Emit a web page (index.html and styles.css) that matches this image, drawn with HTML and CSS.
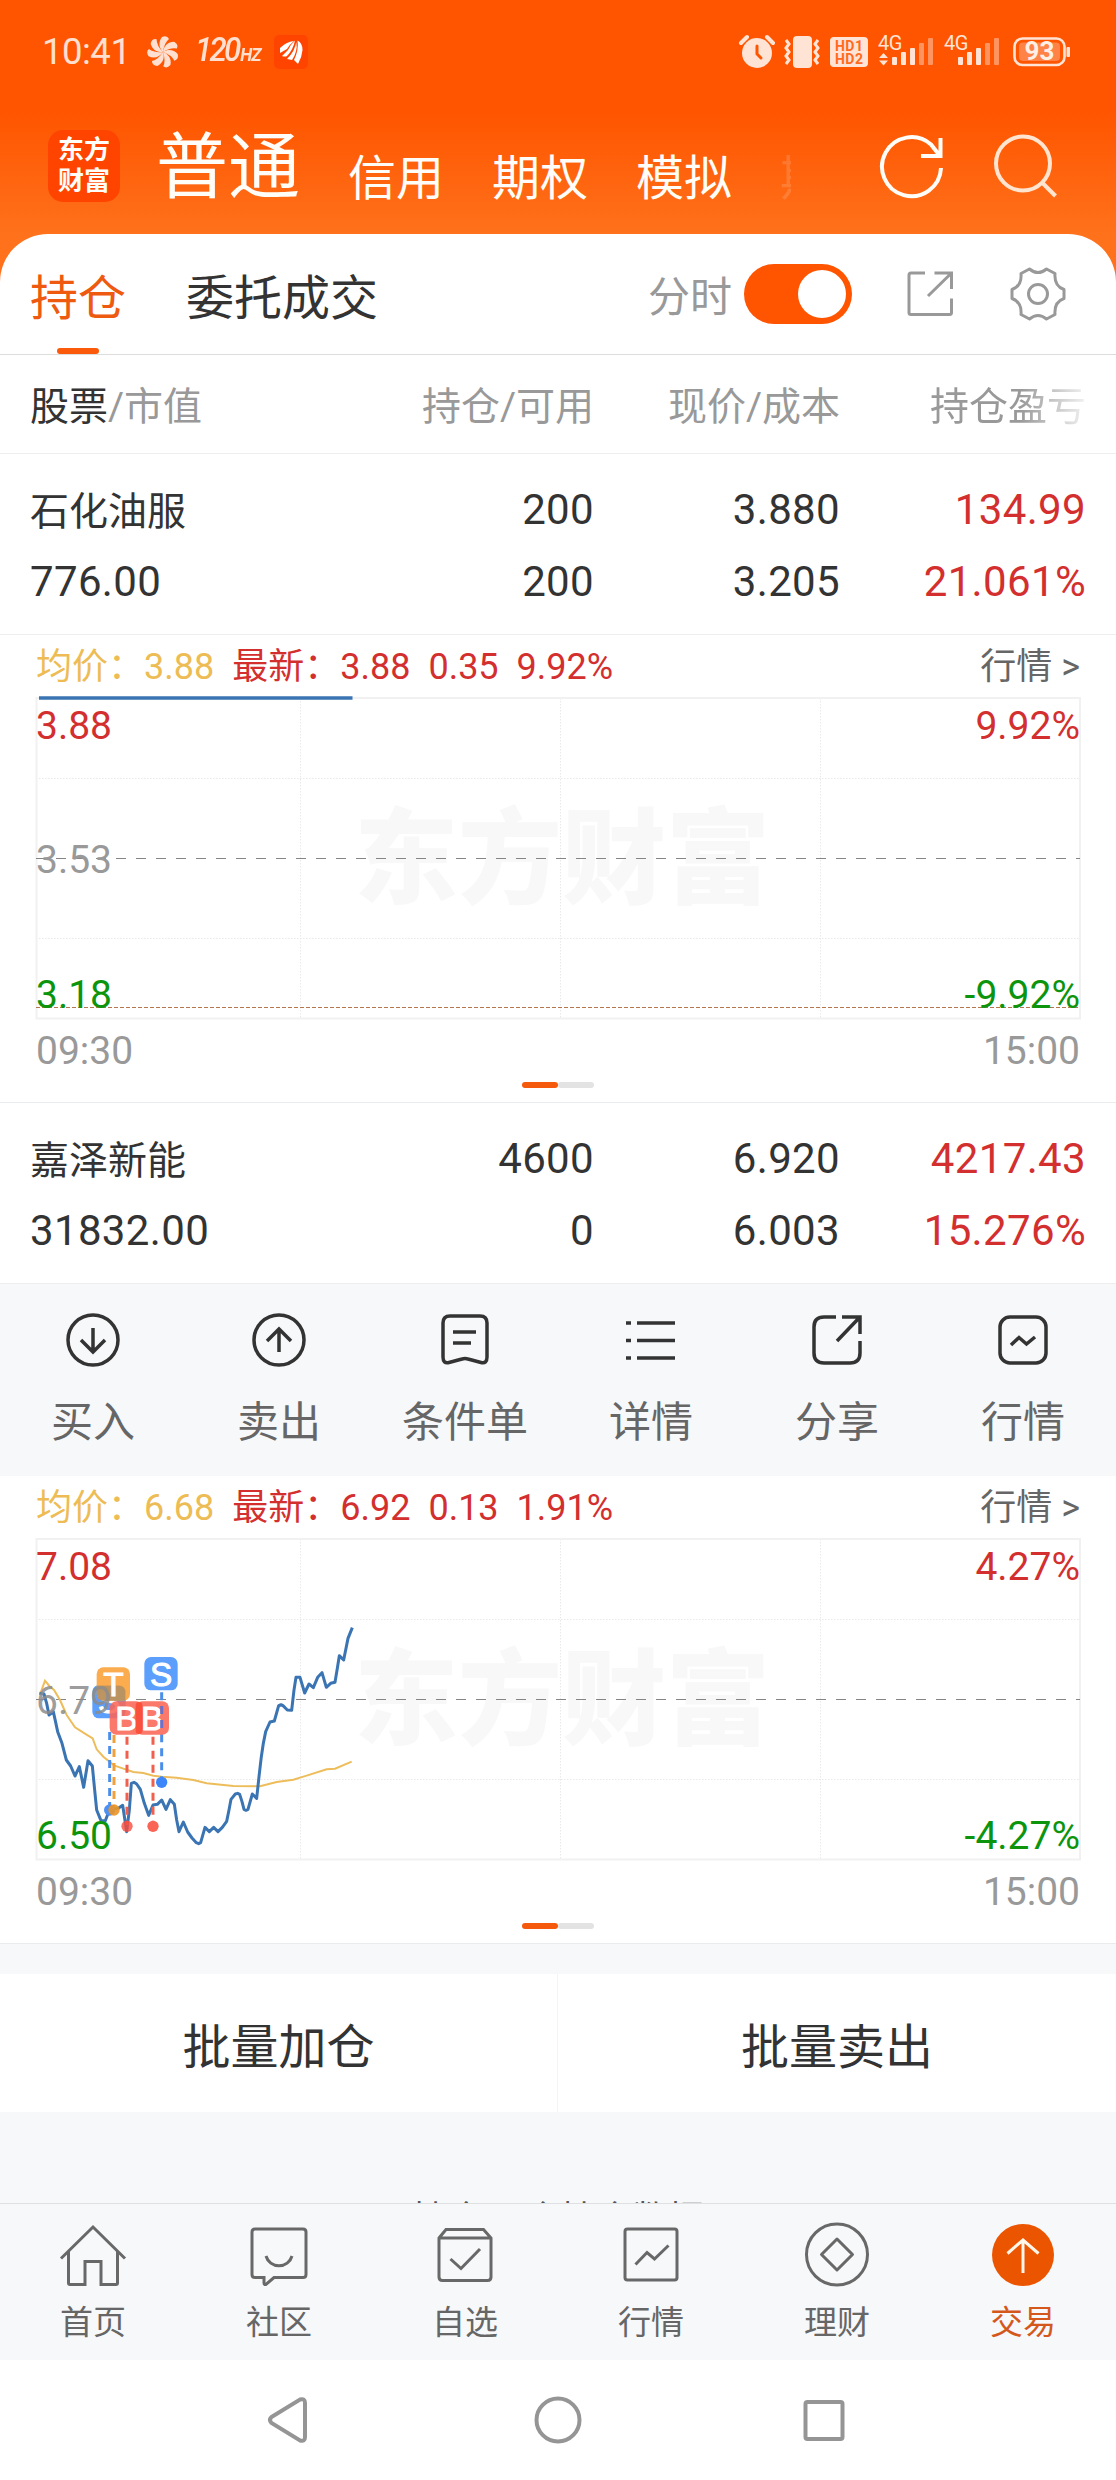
FILE: index.html
```html
<!DOCTYPE html>
<html lang="zh-CN">
<head>
<meta charset="utf-8">
<title>持仓</title>
<link rel="stylesheet" href="styles.css">
</head>
<body>
<header class="top">
  <div class="status">
    <span class="clock">10:41</span>
    <svg class="fan" width="32" height="32" viewBox="-16 -16 32 32">
      <g fill="#ffe0d0"><path id="blade" d="M0 0C-4-4-5-10-1-15Q4-17 6-13Q1-9 0 0Z"/><use href="#blade" transform="rotate(51.4)"/><use href="#blade" transform="rotate(102.8)"/><use href="#blade" transform="rotate(154.3)"/><use href="#blade" transform="rotate(205.7)"/><use href="#blade" transform="rotate(257.1)"/><use href="#blade" transform="rotate(308.6)"/></g>
    </svg>
    <span class="hz">120<small>HZ</small></span>
    <svg class="mini" width="34" height="34" viewBox="0 0 34 34"><rect width="34" height="34" rx="5" fill="#ff4400"/><g fill="#fff"><path d="M6 13Q12 7 20 6Q15 10 13 14L6 18Z"/><path d="M21 5.500Q16 10 14 15L8 21Q11 22 13 21Q19 15 21 5.500Z"/><path d="M23.500 5.500Q28.500 8 28.500 15Q28 22 24 29L20 25Q25 15 23.500 5.500Z"/><path d="M22.300 7Q21 16 13 24L18 25Q24 16 22.300 7Z"/></g></svg>
    <svg class="sys" width="334" height="36" viewBox="738 34 334 36">
      <g fill="#ffe4d6">
        <circle cx="757" cy="53" r="15"/>
        <path d="M741 43l6-6M773 43l-6-6" stroke="#ffe4d6" stroke-width="4" stroke-linecap="round"/>
        <path d="M757 46v8l4 4" stroke="#ff5500" stroke-width="3" fill="none" stroke-linecap="round"/>
        <rect x="793" y="36" width="19" height="32" rx="4"/>
        <path d="M786 40l3 4-3 4 3 4-3 4 3 4-3 4M818 40l-3 4 3 4-3 4 3 4-3 4 3 4" stroke="#ffe4d6" stroke-width="3" fill="none"/>
        <rect x="830" y="37" width="38" height="30" rx="4"/>
        <rect x="892" y="57" width="5" height="8" rx="1"/><rect x="901" y="52" width="5" height="13" rx="1"/><rect x="910" y="48" width="5" height="17" rx="1"/>
        <rect x="958" y="57" width="5" height="8" rx="1"/><rect x="967" y="52" width="5" height="13" rx="1"/><rect x="976" y="48" width="5" height="17" rx="1"/>
        <path d="M879 58l4.500-5 4.500 5zM879 60.500l4.500 5 4.500-5z"/>
        <rect x="1066.500" y="47" width="3.500" height="10" rx="1"/>
      </g>
      <g fill="#ff9460"><rect x="919" y="43" width="5" height="22" rx="1"/><rect x="928" y="38" width="5" height="27" rx="1"/><rect x="985" y="43" width="5" height="22" rx="1"/><rect x="994" y="38" width="5" height="27" rx="1"/></g>
      <rect x="1014.500" y="38.500" width="50" height="26.500" rx="8" fill="none" stroke="#ffe4d6" stroke-width="2.600"/>
      <rect x="1019" y="42.500" width="41" height="18.500" rx="4" fill="#ff8246"/>
      <g class="sys-text">
        <text x="835" y="50.500" class="hd" textLength="28">HD1</text><text x="835" y="64" class="hd" textLength="28">HD2</text>
        <text x="878" y="50" class="net">4G</text><text x="944" y="50" class="net">4G</text>
        <text x="1039.500" y="60" class="pct" text-anchor="middle">93</text>
      </g>
    </svg>
  </div>
  <nav class="accounts">
    <div class="logo"><span>东方</span><span>财富</span></div>
    <div class="account-tabs"><span class="big">普通</span><span class="small">信用</span><span class="small">期权</span><span class="small">模拟</span><span class="small cut">期</span></div>
    <svg class="head-icons" width="180" height="68" viewBox="879 133 180 68" fill="none" stroke-width="4">
      <path d="M941 168A29.500 29.500 0 1 1 931 144.500L940 156M921 156h19.500v-18" stroke="#fffdf8"/>
      <circle cx="1023" cy="163.500" r="27" stroke="#ffe4d0"/><path d="M1042 182.500l13.500 13.500" stroke="#ffe4d0"/>
    </svg>
  </nav>
</header>

<main class="sheet">
  <div class="tabs">
    <span class="tab active">持仓</span>
    <span class="tab">委托成交</span>
    <span class="toggle-label">分时</span>
    <span class="toggle"><i></i></span>
    <svg class="tab-tools" width="160" height="56" viewBox="906 266 160 56" fill="none" stroke="#999" stroke-width="3">
      <path d="M925 273H911Q909 273 909 275V312.500Q909 314.500 911 314.500H949.500Q951.500 314.500 951.500 312.500V298.500M934.500 273H951.500V289M951 273.500L928 296"/>
      <g transform="translate(1038 294)" stroke-linejoin="round"><path d="M-8.500-25Q0-18 8.500-25L17-20.500Q16-8 26-4.500V4.500Q16 8 17 20.500L8.500 25Q0 18-8.500 25L-17 20.500Q-16 8-26 4.500V-4.500Q-16-8-17-20.500Z"/><circle r="9.500"/></g>
    </svg>
  </div>

  <div class="grid head">
    <span><b>股票</b>/市值</span><span>持仓/可用</span><span>现价/成本</span><span class="fade">持仓盈亏</span>
  </div>

  <div class="grid holding">
    <span class="name">石化油服</span><span>200</span><span>3.880</span><span class="up">134.99</span>
    <span>776.00</span><span>200</span><span>3.205</span><span class="up">21.061%</span>
  </div>

  <section class="chart">
    <div class="quote"><span class="avg">均价：3.88</span><span class="up">最新：3.88</span><span class="up">0.35</span><span class="up">9.92%</span><a>行情 &gt;</a></div>
    <svg class="plot" width="1116" height="321" viewBox="0 698 1116 321">
      <text class="mark" x="562" y="896" text-anchor="middle">东方财富</text>
      <path class="dots" d="M36 778.500H1080M36 938.500H1080M300.500 698V1018M560.500 698V1018M820.500 698V1018"/>
      <rect class="frame" x="36.500" y="698" width="1043.500" height="320.500"/>
      <path class="mid" d="M36 858.500H1080"/>
      <path class="limit" d="M36 1007.500H1080"/>
      <path d="M39 698H352.500" stroke="#3a74b3" stroke-width="3.500"/>
      <g class="axis"><text class="r" x="36" y="739">3.88</text><text class="n" x="36" y="873">3.53</text><text class="g" x="36" y="1008">3.18</text>
      <text class="r" x="1080" y="739" text-anchor="end">9.92%</text><text class="g" x="1080" y="1008" text-anchor="end">-9.92%</text></g>
    </svg>
    <div class="times"><span>09:30</span><span>15:00</span></div>
    <div class="pager"><i class="on"></i><i></i></div>
  </section>

  <div class="grid holding">
    <span class="name">嘉泽新能</span><span>4600</span><span>6.920</span><span class="up">4217.43</span>
    <span>31832.00</span><span>0</span><span>6.003</span><span class="up">15.276%</span>
  </div>

  <div class="actions">
    <div><svg viewBox="-27 -27 54 54"><circle r="25"/><path d="M0-12V12M-12 0L0 12 12 0"/></svg><span>买入</span></div>
    <div><svg viewBox="-27 -27 54 54"><circle r="25"/><path d="M0 12V-11M-12 1L0-11 12 1"/></svg><span>卖出</span></div>
    <div><svg viewBox="-27 -27 54 54"><path d="M-22 17V-17Q-22-24-15-24H15Q22-24 22-17V17Q22 24 16 22.500L3 19Q0 18-3 19L-16 22.500Q-22 24-22 17ZM-12-8H11M-12 3H6"/></svg><span>条件单</span></div>
    <div><svg viewBox="-27 -27 54 54"><path d="M-14-17H24M-14 .500H24M-14 18H24M-25-17h5M-25 .500h5M-25 18h5"/></svg><span>详情</span></div>
    <div><svg viewBox="-27 -27 54 54"><path d="M-1-23H-13Q-23-23-23-13V13Q-23 23-13 23H13Q23 23 23 13V1M5-23H23V-6M22-22L0 1"/></svg><span>分享</span></div>
    <div><svg viewBox="-27 -27 54 54"><rect x="-23" y="-23" width="46" height="46" rx="10"/><path d="M-12 5L-4-2.500 3.500 4 12-3"/></svg><span>行情</span></div>
  </div>

  <section class="chart">
    <div class="quote"><span class="avg">均价：6.68</span><span class="up">最新：6.92</span><span class="up">0.13</span><span class="up">1.91%</span><a>行情 &gt;</a></div>
    <svg class="plot" width="1116" height="321" viewBox="0 1539 1116 321">
      <text class="mark" x="562" y="1737" text-anchor="middle">东方财富</text>
      <path class="dots" d="M36 1619.500H1080M36 1779.500H1080M300.500 1539V1859M560.500 1539V1859M820.500 1539V1859"/>
      <rect class="frame" x="36.500" y="1539" width="1043.500" height="320.500"/>
      <path class="mid" d="M36 1699.500H1080"/>
      <g transform="translate(0 1530) scale(.333333)" fill="none">
        <polyline stroke="#edbd5c" stroke-width="6" points="122,488 135,452 148,468 162,480 180,510 200,555 225,592 250,608 278,625 290,658 310,680 342,706 370,716 400,726 430,729 460,737 485,740 530,743 580,750 620,760 700,768 780,769 830,756 880,749 920,737 980,718 1005,716 1055,695"/>
        <polyline stroke="#3a74b3" stroke-width="9" stroke-linejoin="round" points="118,490 132,492 140,520 147,555 160,545 173,605 186,640 199,690 212,708 225,738 238,710 251,772 264,692 277,708 284,780 290,840 303,872 316,872 329,838 355,835 368,826 380,905 388,840 394,760 402,757 410,762 421,778 433,820 446,856 459,825 472,823 485,810 498,838 511,809 523,823 530,870 537,905 550,876 563,906 576,924 589,938 596,941 602,938 615,892 628,905 641,892 654,905 667,892 680,874 687,840 693,808 706,792 713,790 719,793 726,815 732,838 738,841 744,838 757,792 770,805 777,740 784,680 790,640 797,605 810,576 823,573 836,527 843,524 849,527 862,540 875,541 882,480 888,442 900,442 914,489 927,462 940,473 953,442 966,428 979,472 992,460 1005,457 1012,415 1018,377 1031,390 1044,325 1057,293"/>
        <g stroke-width="9" stroke-dasharray="24 18">
          <path d="M329 606V835" stroke="#4a8eea"/><path d="M342 615V835" stroke="#f0a03c"/><path d="M381 620V885M459 620V885" stroke="#f0604f"/><path d="M485 487V750" stroke="#4a8eea"/>
        </g>
        <circle cx="329" cy="840" r="17" fill="#4a90f5"/><circle cx="342" cy="840" r="17" fill="#ec9526" opacity=".9"/>
        <circle cx="381" cy="889" r="17" fill="#fa4b3b" opacity=".8"/><circle cx="459" cy="889" r="17" fill="#fa6455"/><circle cx="485" cy="757" r="17" fill="#3d86fa"/>
        <g class="badge">
          <rect x="277" y="465" width="100" height="100" rx="20" fill="#5c9efc"/><text x="327" y="550">S</text>
          <rect x="290" y="412" width="100" height="100" rx="20" fill="#fba641" opacity=".93"/>
          <path d="M290 490V467H357Q376 467 376 487V512H310Q290 512 290 490Z" fill="#a88d69" opacity=".75"/>
          <text x="340" y="498">T</text>
          <rect x="329" y="514" width="100" height="100" rx="20" fill="#fa6656" opacity=".88"/><text x="379" y="600">B</text>
          <rect x="407" y="514" width="100" height="100" rx="20" fill="#fa6656" opacity=".88"/><text x="456" y="600">B</text>
          <rect x="407" y="516" width="20" height="96" rx="10" fill="#fa4b36" opacity=".8"/>
          <rect x="433" y="381" width="100" height="100" rx="20" fill="#5c9efc"/><text x="483" y="468">S</text>
          <path d="M485 528V602" stroke="#6f6fc8" stroke-width="9" stroke-dasharray="24 18"/>
        </g>
      </g>
      <g class="axis"><text class="r" x="36" y="1580">7.08</text><text class="n over" x="36" y="1714">6.79</text><text class="g" x="36" y="1849">6.50</text>
      <text class="r" x="1080" y="1580" text-anchor="end">4.27%</text><text class="g" x="1080" y="1849" text-anchor="end">-4.27%</text></g>
    </svg>
    <div class="times"><span>09:30</span><span>15:00</span></div>
    <div class="pager"><i class="on"></i><i></i></div>
  </section>

  <div class="batch"><span>批量加仓</span><span>批量卖出</span></div>
  <div class="note"><span>持仓10个持仓数据</span></div>
</main>

<nav class="bottom">
  <div><svg viewBox="-36 -33 72 66"><path d="M-32 3.500L0-28 32 3.500M-24.500-4V28Q-24.500 29.500-23 29.500H-8V6.500H8V29.500H23Q24.500 29.500 24.500 28V-4"/></svg><span>首页</span></div>
  <div><svg viewBox="-36 -33 72 66"><path d="M-15 22.500H-24Q-27 22.500-27 19.500V-23Q-27-26-24-26H24Q27-26 27-23V19.500Q27 22.500 24 22.500H-5L-13 29.500Q-15 30-15 28ZM-13 1A13.500 13.500 0 0 0 13 1"/></svg><span>社区</span></div>
  <div><svg viewBox="-36 -33 72 66"><path d="M-26-17L-19-25.500H18.500L26-17V22Q26 25.500 22.500 25.500H-22.500Q-26 25.500-26 22ZM-26-17H26M-14.500 4L-4 13.500 15-6"/></svg><span>自选</span></div>
  <div><svg viewBox="-36 -33 72 66"><rect x="-26" y="-26" width="52" height="51" rx="2.500"/><path d="M-15.500 9.500L-4-2.500 3.500 4 17.500-9.500"/></svg><span>行情</span></div>
  <div><svg viewBox="-36 -33 72 66"><circle cy="-.500" r="30.500"/><path d="M-15.500-.500L0-16 15.500-.500 0 15Z" stroke-linejoin="round"/></svg><span>理财</span></div>
  <div class="on"><svg viewBox="-36 -33 72 66"><circle r="31" fill="#eb5500" stroke="none"/><path d="M0 18V-14M-15.500-1.500L0-15 15.500-1.500" stroke="#fff6ea"/></svg><span>交易</span></div>
</nav>
<footer class="softkeys">
  <svg width="580" height="52" viewBox="266 2394 580 52" fill="none" stroke="#959595" stroke-width="4">
    <path d="M271.500 2417L300 2399.500Q305 2398 305 2403V2437Q305 2442 300 2440.500L271.500 2423Q268.500 2420 271.500 2417Z"/>
    <circle cx="558" cy="2420" r="21.500"/><rect x="805.500" y="2402" width="37" height="37" rx="2"/>
  </svg>
</footer>
</body>
</html>
```
FILE: styles.css
```css
* { box-sizing: border-box; }
body {
  margin: 0;
  width: 1116px;
  height: 2480px;
  overflow: hidden;
  display: flex;
  flex-direction: column;
  background: #fff;
  color: #333;
  font-family: Roboto, "Noto Sans CJK SC", sans-serif;
}
svg { display: block; flex: none; }
i { display: block; }

/* Orange header */
.top {
  flex: none;
  height: 290px;
  margin-bottom: -56px;
  background: linear-gradient(#ff5500 0, #ff5500 112px, #ff711b 234px);
}
.status { display: flex; align-items: center; height: 104px; padding-left: 42px; color: #ffe0d0; }
.clock { font-size: 36.5px; line-height: 40px; width: 105px; letter-spacing: -0.5px; }
.fan { margin-right: 16px; }
.hz { width: 79px; font-size: 34px; font-style: italic; font-weight: 500; line-height: 40px; white-space: nowrap; letter-spacing: -3px; transform: scaleX(0.92); transform-origin: left; }
.hz small { font-size: 19px; font-weight: 700; letter-spacing: -1px; margin-left: 2px; }
.sys { margin-left: auto; margin-right: 44px; overflow: visible; }
.sys-text .hd { font-size: 14px; font-weight: 700; fill: #ff6a20; }
.sys-text .net { font-size: 20px; fill: #ffe4d6; letter-spacing: -0.5px; }
.sys-text .pct { font-size: 26px; font-weight: 700; fill: #fff0e6; }

.accounts { display: flex; align-items: flex-start; padding: 26px 57px 0 48px; color: #fffdf8; }
.logo {
  width: 72px; height: 72px; padding-top: 3px; border-radius: 15px; background: #ff4400;
  display: flex; flex-direction: column; align-items: center;
  font: 700 26px/30.500px "Noto Sans CJK SC", sans-serif;
}
.account-tabs { display: flex; align-items: flex-start; gap: 48px; width: 640px; margin-left: 36px; font-size: 48px; line-height: 72px; white-space: nowrap; }
.account-tabs .big { font-size: 72px; padding-top: 2px; }
.account-tabs .small { padding-top: 13px; }
.account-tabs .cut { width: 11px; overflow: hidden; opacity: 0.15; }
.head-icons { margin: 3px 0 0 auto; }

/* White sheet */
.sheet { flex: none; height: 1969px; overflow: hidden; border-radius: 48px 48px 0 0; background: #fff; }
.tabs { display: flex; align-items: center; height: 121px; padding: 0 50px 0 30px; border-bottom: 1px solid #ddd; font-size: 48px; }
.tab { position: relative; height: 120px; line-height: 120px; padding-top: 5px; margin-right: 60px; }
.tab.active { color: #ee5a10; }
.tab.active::after { content: ""; position: absolute; left: 27px; bottom: 0; width: 42px; height: 6px; border-radius: 3px; background: #fa5a0a; }
.toggle-label { margin-left: auto; padding-top: 8px; font-size: 42px; line-height: 50px; color: #999; }
.toggle { width: 108px; height: 60px; margin: 0 54px 0 12px; padding: 6px; border-radius: 30px; background: #ff5500; display: flex; justify-content: flex-end; }
.toggle i { width: 48px; height: 48px; border-radius: 50%; background: #fff; }

.grid { display: grid; grid-template-columns: 318px 246px 246px 246px; padding-left: 30px; }
.grid span { text-align: right; white-space: nowrap; }
.grid span:nth-child(4n + 1) { text-align: left; }
.head { height: 99px; padding-top: 2px; border-bottom: 1px solid #eee; font-size: 39px; line-height: 100px; color: #999; }
.head b { font-weight: 400; color: #333; }
.head .fade { -webkit-mask-image: linear-gradient(90deg, #000 180px, transparent 256px); mask-image: linear-gradient(90deg, #000 180px, transparent 256px); }
.holding { height: 181px; padding-top: 20px; border-bottom: 1px solid #eee; font-size: 42px; letter-spacing: 0.35px; line-height: 72px; grid-auto-rows: 72px; }
.holding .name { font-size: 39px; letter-spacing: 0; padding-top: 2px; }
.up { color: #d32f2f; }

.chart { height: 468px; border-bottom: 1px solid #eaebed; }
.quote { display: flex; gap: 18px; height: 63px; padding: 1px 36px 0; font-size: 36px; line-height: 63px; }
.quote .avg { color: #edbc55; }
.quote a { margin-left: auto; color: #666; }
.plot { overflow: visible; }
.frame { fill: none; stroke: #f1f1f1; stroke-width: 2; }
.dots { fill: none; stroke: #e9e9e9; stroke-dasharray: 1.500 1.500; }
.mid { stroke: #858585; stroke-width: 1.200; stroke-dasharray: 10 10; }
.limit { stroke: #b5764d; stroke-width: 1.100; stroke-dasharray: 4 2; }
.mark { font-family: "Noto Sans CJK SC", sans-serif; font-weight: 900; font-size: 104px; fill: #f8f8f8; }
.axis { font-size: 39px; }
.axis .r { fill: #d32f2f; }
.axis .n { fill: #999; }
.axis .g { fill: #0d940d; }
.axis .over { fill: #8c8c8c; fill-opacity: 0.85; }
.badge text { fill: #fff; stroke: #fff; stroke-width: 3; font: 100px "Liberation Sans", sans-serif; text-anchor: middle; }
.times { display: flex; justify-content: space-between; height: 63px; padding: 1px 36px 0; font-size: 39px; line-height: 63px; color: #999; }
.pager { display: flex; justify-content: center; }
.pager i { width: 36px; height: 6px; border-radius: 3px; background: #e3e3e3; }
.pager .on { background: #f55a0c; }

.actions { display: grid; grid-template-columns: repeat(6, 186px); height: 192px; padding-top: 29px; background: #f7f8fa; }
.actions div { display: flex; flex-direction: column; align-items: center; gap: 35px; color: #666; font-size: 42px; line-height: 42px; }
.actions svg { width: 54px; height: 54px; fill: none; stroke: #333; stroke-width: 3.500; }

.batch { display: grid; grid-template-columns: 1fr 1fr; height: 168px; border-top: 30px solid #f7f8fa; font-size: 48px; line-height: 144px; text-align: center; }
.batch span { height: 138px; padding-top: 2px; }
.batch span:first-child { border-right: 1px solid #f3f4f6; }
.note { height: 91px; padding-top: 88px; background: #f7f8fa; overflow: hidden; text-align: center; font-size: 36px; line-height: 40px; color: #555; }

.bottom { flex: none; display: grid; grid-template-columns: repeat(6, 186px); height: 157px; padding-top: 18px; border-top: 1px solid #dfe0e2; background: #f7f8fa; color: #666; font-size: 33px; line-height: 34px; }
.bottom div { display: flex; flex-direction: column; align-items: center; gap: 18px; }
.bottom svg { width: 72px; height: 66px; fill: none; stroke: #686868; stroke-width: 3; }
.bottom .on { color: #d4581c; }
.softkeys { display: flex; height: 120px; padding: 34px 0 0 266px; background: #fff; }
```
